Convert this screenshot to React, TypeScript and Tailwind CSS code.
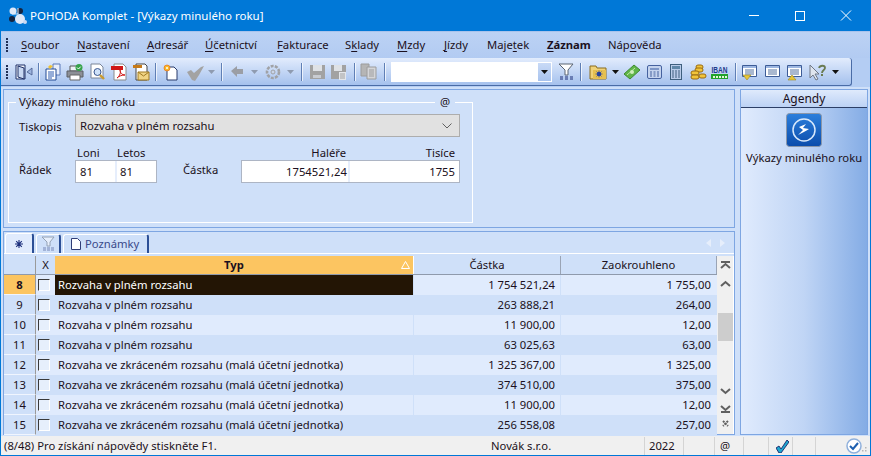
import React from "react";

const font = { fontFamily: '"Noto Sans", "DejaVu Sans", sans-serif' };

function U({ children }: { children: React.ReactNode }) {
  return <span className="underline underline-offset-2">{children}</span>;
}

function Grip() {
  return (
    <div className="flex flex-col gap-[1px] w-[3px] shrink-0">
      {[0, 1, 2, 3, 4].map((i) => (
        <div key={i} className="w-[2px] h-[2px] bg-[#1f2f55]" />
      ))}
    </div>
  );
}

function Sep({ className }: { className: string }) {
  return <div className={"w-[2px] h-[18px] shrink-0 border-l border-[#5f7fb5] bg-white/70 " + className} />;
}

function Drop({ className, grey }: { className: string; grey?: boolean }) {
  return (
    <svg width="7" height="4" viewBox="0 0 7 4" className={"shrink-0 " + className}>
      <path d="M0 0h7L3.500 4z" fill={grey ? "#8f9bb0" : "#111"} />
    </svg>
  );
}

function Ic({ w = 16, h = 16, className, children }: { w?: number; h?: number; className: string; children: React.ReactNode }) {
  return (
    <svg width={w} height={h} viewBox={`0 0 ${w} ${h}`} className={"shrink-0 overflow-visible " + className}>
      {children}
    </svg>
  );
}

const Door = (
  <>
    <path d="M1 1h9v14H1z" fill="#f2f5fb" stroke="#1f3068" />
    <path d="M3 2l6 2v11l-6-2z" fill="#c8d8f2" stroke="#1f3068" />
    <path d="M17 4l-5 4 5 3v-2h0V6z" fill="#9db4de" stroke="#44598a" strokeWidth=".8" />
  </>
);
const Docs = (
  <>
    <path d="M8 0h7v11H8z" fill="#e8eefb" stroke="#5a78b8" />
    <path d="M1 5h10v11H1z" fill="#fff" stroke="#234a94" />
    <path d="M3 8h6M3 10h6M3 12h6M3 14h4" stroke="#2c5bb0" />
    <path d="M5 1l3 1-3 3-2-2z" fill="#f2c231" />
  </>
);
const Printer = (
  <>
    <path d="M3 2h9v5H3z" fill="#eef1f6" stroke="#555" />
    <path d="M0 7h16v6H0z" fill="#8c8f96" stroke="#5b5e64" />
    <path d="M3 11h10v5H3z" fill="#fff" stroke="#666" />
    <circle cx="12" cy="3.500" r="3.500" fill="#35a24a" />
    <path d="M10 3.500l1.500 1.500 2.200-2.400" stroke="#fff" fill="none" />
  </>
);
const Preview = (
  <>
    <path d="M1 0h9l3 3v11H1z" fill="#fff" stroke="#7a8598" />
    <circle cx="7.500" cy="8" r="3.500" fill="#cfe2fa" stroke="#3a5790" />
    <path d="M10 11l4 4" stroke="#c99a2e" strokeWidth="2.400" />
  </>
);
const Pdf = (
  <>
    <path d="M3 0h9l3 3v13H3z" fill="#fff" stroke="#8a8a8a" />
    <path d="M0 2h12v4H0z" fill="#d01818" />
    <path d="M6 14c3-2 4-6 3-8 0 3 2 5 5 5-3 0-6 1-8 3z" fill="none" stroke="#d01818" />
  </>
);
const MailPdf = (
  <>
    <path d="M3 0h9l2 2v14H3z" fill="#fff" stroke="#444" />
    <path d="M0 1h9v3H0z" fill="#c77a18" />
    <path d="M5 8h11v8H5z" fill="#f0d484" stroke="#a07a22" />
    <path d="M5 8l5.500 4L16 8" fill="none" stroke="#a07a22" />
  </>
);
const NewDoc = (
  <>
    <path d="M4 3h7l3 3v10H4z" fill="#fff" stroke="#283a6b" />
    <circle cx="4" cy="4" r="3" fill="#f8b92a" stroke="#e8701a" strokeWidth=".7" />
    <circle cx="4" cy="4" r="1" fill="#fff" />
  </>
);
const CheckGrey = <path d="M0 8l4-2 3 3 7-6 3-1-5 9-4 6-3-1z" fill="#a3a3a3" />;
const Back = <path d="M0 6l6-5v3h6v5H6v3z" fill="#9b9ea5" />;
const Gear = (
  <>
    <circle cx="8" cy="8" r="6" fill="none" stroke="#a0a2a6" strokeWidth="2.600" strokeDasharray="3 1.200" />
    <circle cx="8" cy="8" r="2" fill="#c9d5e8" stroke="#a0a2a6" />
  </>
);
const Save = (
  <>
    <path d="M0 1h15v14H0z" fill="#a2a2a2" />
    <path d="M3 1h9v6H3z" fill="#dfe2e6" />
    <path d="M3 11h8v3H3z" fill="#c9ccd1" />
  </>
);
const Save2 = (
  <>
    <path d="M0 1h15v14H0z" fill="#a2a2a2" />
    <path d="M3 1h8v6H3z" fill="#dfe2e6" />
    <path d="M8 8h7v8H8z" fill="#e3e6ea" />
    <path d="M9 10h5M9 12h5M9 14h5" stroke="#a2a2a2" />
  </>
);
const Copy = (
  <>
    <path d="M0 0h8v12H0z" fill="#b5b5b5" stroke="#9c9c9c" />
    <path d="M6 3h9v12H6z" fill="#d4d5d8" stroke="#9c9c9c" />
    <path d="M8 6h5M8 8h5M8 10h5M8 12h5" stroke="#9c9c9c" />
  </>
);
const Filter = (
  <>
    <path d="M1 0h14l-5 6v5H7V6z" fill="#fff" stroke="#5a6472" />
    <path d="M2 13h3M7 13h3M12 13h3M2 15h3M7 15h3M12 15h3" stroke="#1e2f77" />
  </>
);
const Folder = (
  <>
    <path d="M0 2h6l1 2h9v11H0z" fill="#efd27a" stroke="#8b6d1f" />
    <path d="M3 6h13v9H3z" fill="#e6c050" />
    <circle cx="9" cy="10" r="2.200" fill="#2744a0" />
    <path d="M9 6.500v7M5.500 10h7M6.500 7.500l5 5M11.500 7.500l-5 5" stroke="#2744a0" strokeWidth=".7" />
  </>
);
const Money = (
  <>
    <path d="M0 10L10 1l6 5-10 9z" fill="#5fb548" stroke="#3f8a32" />
    <path d="M3 11l8-7" stroke="#bfe8a8" />
    <circle cx="8" cy="8" r="2" fill="#cfeeba" />
  </>
);
const CalcWide = (
  <>
    <rect x=".5" y="1.500" width="14" height="13" rx="1.500" fill="#c4d3ee" stroke="#46629f" />
    <path d="M3 4h9v2H3z" fill="#7d96c7" />
    <path d="M3 8h2M6.500 8h2M10 8h2M3 10h2M6.500 10h2M10 10h2M3 12h2M6.500 12h2M10 12h2" stroke="#46629f" />
  </>
);
const CalcTall = (
  <>
    <rect x=".5" y=".5" width="11" height="15" fill="#b9cbe9" stroke="#3e5f7e" />
    <path d="M2 2h8v3H2z" fill="#5f87a8" />
    <path d="M2 7h2M5 7h2M8 7h2M2 9h2M5 9h2M8 9h2M2 11h2M5 11h2M8 11h2M2 13h2M5 13h2M8 13h2" stroke="#3e5f7e" />
  </>
);
const Coins = (
  <>
    <rect x="6" y="1" width="7" height="4" rx="2" fill="#f1c43a" stroke="#9a6b10" />
    <rect x="5" y="4" width="8" height="4" rx="2" fill="#f1c43a" stroke="#9a6b10" />
    <rect x="1" y="7" width="8" height="4" rx="2" fill="#f1c43a" stroke="#9a6b10" />
    <rect x="1" y="11" width="8" height="4" rx="2" fill="#f1c43a" stroke="#9a6b10" />
    <rect x="9" y="10" width="7" height="4" rx="2" fill="#f1c43a" stroke="#9a6b10" />
  </>
);
const Iban = (
  <>
    <text x=".5" y="8.500" fontSize="9" fontWeight="700" fill="#223a8c" textLength="16" lengthAdjust="spacingAndGlyphs" fontFamily="Liberation Sans">
      IBAN
    </text>
    <path d="M0 10h17v5H0z" fill="#22a32b" />
    <path d="M2 12h2v2H2zM5 12h2v2H5zM8 12h2v2H8zM11 12h2v2h-2zM14 12h2v2h-2z" fill="#e6f7d8" />
  </>
);
function ListIc({ mark }: { mark: "down" | "none" | "up" }) {
  return (
    <>
      <path d="M.5 1.500h14v11h-14z" fill="#fff" stroke="#3d5c97" />
      <path d="M1 2h13v2H1z" fill="#9db7e2" />
      <path d="M3 6h9M3 8h9M3 10h9" stroke="#53709f" />
      {mark === "down" && <path d="M1 11h8l-4 5z" fill="#e8c63a" stroke="#a08a20" strokeWidth=".6" />}
      {mark === "up" && <path d="M1 16l4-5 4 5z" fill="#e8c63a" stroke="#a08a20" strokeWidth=".6" />}
    </>
  );
}
const CursorHelp = (
  <>
    <path d="M1 1v13l3-3 3 5 2-1-3-5h4z" fill="#dfe5ef" stroke="#707886" />
    <path d="M10 4c1-3 6-3 6 0 0 2-3 2-3 5" fill="none" stroke="#6a7b52" strokeWidth="1.800" />
    <path d="M12 10h2v2h-2z" fill="#6a7b52" />
  </>
);

const menus: [React.ReactNode, string][] = [
  [<><U>S</U>oubor</>, "w-[56px]"],
  [<><U>N</U>astavení</>, "w-[70px]"],
  [<><U>A</U>dresář</>, "w-[58px]"],
  [<><U>Ú</U>četnictví</>, "w-[72px]"],
  [<><U>F</U>akturace</>, "w-[68px]"],
  [<>S<U>k</U>lady</>, "w-[52px]"],
  [<><U>M</U>zdy</>, "w-[47px]"],
  [<><U>J</U>ízdy</>, "w-[43px]"],
  [<>Maje<U>t</U>ek</>, "w-[60px]"],
  [<span className="font-bold"><U>Z</U>áznam</span>, "w-[61px]"],
  [<>Náp<U>o</U>věda</>, "w-[60px]"],
];

const rows = [
  [8, "Rozvaha v plném rozsahu", "1 754 521,24", "1 755,00"],
  [9, "Rozvaha v plném rozsahu", "263 888,21", "264,00"],
  [10, "Rozvaha v plném rozsahu", "11 900,00", "12,00"],
  [11, "Rozvaha v plném rozsahu", "63 025,63", "63,00"],
  [12, "Rozvaha ve zkráceném rozsahu (malá účetní jednotka)", "1 325 367,00", "1 325,00"],
  [13, "Rozvaha ve zkráceném rozsahu (malá účetní jednotka)", "374 510,00", "375,00"],
  [14, "Rozvaha ve zkráceném rozsahu (malá účetní jednotka)", "11 900,00", "12,00"],
  [15, "Rozvaha ve zkráceném rozsahu (malá účetní jednotka)", "256 558,08", "257,00"],
] as const;

function ScrollBtn({ d, className }: { d: string; className: string }) {
  return (
    <svg width="11" height="9" viewBox="0 0 11 9" className={"shrink-0 " + className}>
      <path d={d} fill="none" stroke="#606060" strokeWidth="2" />
    </svg>
  );
}

export default function App() {
  return (
    <div style={font} className="w-[871px] h-[456px] flex flex-col overflow-hidden border border-[#0078d7] border-t-0 bg-[#cfe0f9] text-[11.25px] leading-none text-[#1b1020]">
      {/* title bar */}
      <div className="h-[31px] shrink-0 bg-[#0078d7] flex items-center text-white">
        <svg width="18" height="18" viewBox="0 0 18 18" className="ml-[8px] shrink-0">
          <circle cx="4" cy="4" r="3.500" fill="#dfe8f8" />
          <circle cx="11" cy="4" r="3" fill="#15233f" />
          <circle cx="3" cy="12" r="3" fill="#15233f" />
          <circle cx="11" cy="12" r="5" fill="#dfe8f8" />
          <circle cx="16" cy="15" r="2" fill="#c9d8f2" />
          <path d="M9 1v6M3 7h6" stroke="#dfe8f8" />
        </svg>
        <span className="ml-[3px] text-[11.5px]">POHODA Komplet - [Výkazy minulého roku]</span>
        <div className="ml-auto flex items-center">
          <div className="w-[46px] flex justify-center"><div className="w-[10px] h-px bg-white" /></div>
          <div className="w-[46px] flex justify-center"><div className="w-[10px] h-[10px] border border-white" /></div>
          <svg width="46" height="11" viewBox="0 0 46 11" className="mr-[1px]">
            <path d="M18 .5l10 10M28 .5l-10 10" stroke="#fff" />
          </svg>
        </div>
      </div>

      {/* menu */}
      <div className="h-[27px] shrink-0 border-t border-[#a9c3ec] bg-gradient-to-b from-[#bcd2f4] to-[#b2cbf2] flex items-center pl-[5px]">
        <Grip />
        <div className="ml-[12px] flex items-center">
          {menus.map(([label, w], i) => (
            <div key={i} className={w}>{label}</div>
          ))}
        </div>
      </div>

      {/* toolbar */}
      <div className="h-[29px] shrink-0 bg-[#b4cdf3] flex">
        <div className="w-[851px] h-[28px] rounded-r-[3px] border-b border-r border-[#4a6ca6] bg-gradient-to-b from-[#e2ecfd] to-[#a5c1ed] flex items-center pl-[5px]">
          <Grip />
          <Ic w={18} className="ml-[6px]">{Door}</Ic>
          <Sep className="ml-[5px]" />
          <Ic className="ml-[5px]">{Docs}</Ic>
          <Ic className="ml-[6px]">{Printer}</Ic>
          <Ic className="ml-[7px]">{Preview}</Ic>
          <Ic className="ml-[5px]">{Pdf}</Ic>
          <Ic className="ml-[6px]">{MailPdf}</Ic>
          <Sep className="ml-[6px]" />
          <Ic className="ml-[6px]">{NewDoc}</Ic>
          <Ic w={17} className="ml-[8px]">{CheckGrey}</Ic>
          <Drop grey className="ml-[4px]" />
          <Sep className="ml-[6px]" />
          <Ic w={13} h={13} className="ml-[8px]">{Back}</Ic>
          <Drop grey className="ml-[7px]" />
          <Ic className="ml-[7px]">{Gear}</Ic>
          <Drop grey className="ml-[6px]" />
          <Sep className="ml-[7px]" />
          <Ic className="ml-[7px]">{Save}</Ic>
          <Ic className="ml-[5px]">{Save2}</Ic>
          <Sep className="ml-[7px]" />
          <Ic className="ml-[5px]">{Copy}</Ic>
          <Sep className="ml-[7px]" />
          <div className="ml-[5px] w-[161px] h-[20px] bg-white flex justify-end shrink-0 border border-white">
            <div className="w-[13px] bg-gradient-to-b from-[#c9daf6] to-[#a8c3ee] flex items-center justify-center">
              <Drop className="" />
            </div>
          </div>
          <Ic className="ml-[6px]">{Filter}</Ic>
          <Sep className="ml-[6px]" />
          <Ic className="ml-[8px]">{Folder}</Ic>
          <Drop className="ml-[6px]" />
          <Ic className="ml-[5px]">{Money}</Ic>
          <Ic w={15} className="ml-[7px]">{CalcWide}</Ic>
          <Ic w={12} className="ml-[8px]">{CalcTall}</Ic>
          <Ic className="ml-[8px]">{Coins}</Ic>
          <Ic w={17} className="ml-[5px]">{Iban}</Ic>
          <Sep className="ml-[7px]" />
          <Ic w={15} className="ml-[5px]"><ListIc mark="down" /></Ic>
          <Ic w={15} className="ml-[8px]"><ListIc mark="none" /></Ic>
          <Ic w={15} className="ml-[7px]"><ListIc mark="up" /></Ic>
          <Ic className="ml-[7px]">{CursorHelp}</Ic>
          <Drop className="ml-[7px]" />
        </div>
      </div>

      {/* body */}
      <div className="flex-1 min-h-0 flex pl-[2px] pr-[2px] pt-[2px]">
        <div className="w-[732px] flex flex-col shrink-0">
          {/* form */}
          <div className="h-[139px] shrink-0 border border-[#7ea6e2] pl-[4px] pt-[12px]">
            <div className="relative w-[465px] h-[121px] border border-white flex flex-col">
              <span className="absolute left-[7px] -top-[7px] bg-[#cfe0f9] px-[3px]">Výkazy minulého roku</span>
              <span className="absolute left-[426px] -top-[7px] bg-[#cfe0f9] px-[5px]">@</span>
              <div className="flex items-center mt-[11px] pl-[10px]">
                <span className="w-[56px] mt-[3px]">Tiskopis</span>
                <div className="w-[385px] h-[23px] border border-[#adadad] bg-[#e1e1e1] flex items-center justify-between pl-[4px] pr-[7px]">
                  <span>Rozvaha v plném rozsahu</span>
                  <svg width="10" height="6" viewBox="0 0 10 6"><path d="M.5.500L5 5 9.500.500" fill="none" stroke="#606060" /></svg>
                </div>
              </div>
              <div className="flex mt-[8px] pl-[10px]">
                <div className="w-[56px] mt-[19px]">Řádek</div>
                <div className="w-[108px]">
                  <div className="flex h-[15px] items-center">
                    <span className="ml-[2px] w-[40px]">Loni</span>
                    <span>Letos</span>
                  </div>
                  <div className="w-[82px] h-[23px] border border-[#adb5c4] bg-white flex items-center">
                    <span className="pl-[4px] w-[41px] h-full flex items-center border-r-2 border-[#e6eefc]">81</span>
                    <span className="pl-[3px]">81</span>
                  </div>
                </div>
                <div className="w-[58px] mt-[19px]">Částka</div>
                <div className="w-[219px]">
                  <div className="flex h-[15px] items-center">
                    <span className="w-[105px] text-right">Haléře</span>
                    <span className="w-[109px] text-right">Tisíce</span>
                  </div>
                  <div className="w-[219px] h-[23px] border border-[#adb5c4] bg-white flex items-center">
                    <span className="w-[108px] h-full flex items-center justify-end pr-[1px] border-r-2 border-[#e6eefc]">1754521,24</span>
                    <span className="flex-1 text-right pr-[4px]">1755</span>
                  </div>
                </div>
              </div>
            </div>
          </div>

          {/* tabs + grid */}
          <div className="mt-[3px] flex-1 min-h-0 border border-[#7ea6e2] flex flex-col">
            <div className="h-[22px] shrink-0 flex items-end border-b border-white pl-[1px]">
              <div className="w-[29px] h-[20px] bg-[#e0ebfd] border-t border-l border-white border-r-2 border-r-[#2c4f96] rounded-t-[3px] flex items-center justify-center">
                <svg width="8" height="8" viewBox="0 0 8 8">
                  <path d="M4 0v8M0 4h8M1.200 1.200l5.600 5.600M6.800 1.200l-5.600 5.600" stroke="#1c2f7c" strokeWidth="1.100" />
                </svg>
              </div>
              <div className="ml-[2px] w-[25px] h-[19px] border-t border-l border-white border-r-2 border-r-[#2c4f96] rounded-t-[3px] flex items-center justify-center">
                <Ic w={14} h={14} className="opacity-50">
                  <path d="M1 0h12l-4 5v4H6V5z" fill="#fff" stroke="#5a6472" />
                  <path d="M2 11h3M6 11h3M10 11h3M2 13h3M6 13h3M10 13h3" stroke="#1e2f77" />
                </Ic>
              </div>
              <div className="ml-[2px] w-[86px] h-[19px] border-t border-l border-white border-r-2 border-r-[#2c4f96] rounded-t-[3px] flex items-center pl-[7px] text-[#3a4a8a]">
                <svg width="10" height="12" viewBox="0 0 10 12" className="shrink-0">
                  <path d="M.5.500h6l3 3v8h-9z" fill="#fff" stroke="#2f3d76" />
                </svg>
                <span className="ml-[4px]">Poznámky</span>
              </div>
              <div className="ml-auto mr-[9px] mb-[6px] flex gap-[9px]">
                <svg width="5" height="8" viewBox="0 0 5 8"><path d="M5 0v8L0 4z" fill="#e6eefb" /></svg>
                <svg width="5" height="8" viewBox="0 0 5 8"><path d="M0 0v8l5-4z" fill="#e6eefb" /></svg>
              </div>
            </div>
            <div className="flex-1 min-h-0 flex mt-[2px]">
              <div className="flex-1 min-w-0 flex flex-col">
                <div className="h-[19px] shrink-0 flex border-b border-[#8f9aac]">
                  <div className="w-[32px] shrink-0 border-r border-[#9a9a9a]" />
                  <div className="w-[19px] shrink-0 flex items-center justify-center">X</div>
                  <div className="w-[358px] shrink-0 bg-[#fcc561] flex items-center justify-center font-bold relative">
                    Typ
                    <svg width="9" height="8" viewBox="0 0 9 8" className="absolute right-[3px] top-[5px]"><path d="M.5 7.500L4.500.500l4 7z" fill="none" stroke="#fff" /></svg>
                  </div>
                  <div className="w-[147px] shrink-0 border-l border-white flex items-center justify-center">Částka</div>
                  <div className="flex-1 border-l border-[#9aa4b5] flex items-center justify-center border-r">Zaokrouhleno</div>
                </div>
                {rows.map((r, i) => {
                  const sel = i === 0;
                  const light = i % 2 === 0;
                  const bg = light ? "bg-[#e0ebfd]" : "bg-[#cfe0f9]";
                  return (
                    <div key={r[0]} className="h-[20px] shrink-0 flex">
                      <div className={"w-[32px] shrink-0 border-r border-b border-r-[#9a9a9a] border-b-[#f0f5fe] flex items-center justify-center " + (sel ? "bg-[#fcc561] font-bold" : "")}>
                        {r[0]}
                      </div>
                      <div className={"w-[19px] shrink-0 flex items-center pl-[2px] " + bg}>
                        <div className="w-[12px] h-[12px] border border-t-[#3a3a3a] border-l-[#3a3a3a] border-r-white border-b-white bg-[#e6effc]" />
                      </div>
                      <div className={"w-[358px] shrink-0 flex items-center pl-[3px] " + (sel ? "bg-[#231505] text-white" : bg)}>
                        {r[1]}
                      </div>
                      <div className={"w-[147px] shrink-0 flex items-center justify-end pr-[5px] border-l border-[#cfe0f9] " + bg}>{r[2]}</div>
                      <div className={"flex-1 flex items-center justify-end pr-[6px] border-l border-[#cfe0f9] " + bg}>{r[3]}</div>
                    </div>
                  );
                })}
              </div>
              <div className="w-[17px] shrink-0 bg-[#f0f0f0] flex flex-col items-center pt-[5px] border-r border-white">
                <ScrollBtn d="M1 1h9M1 7l4.500-4 4.500 4" className="" />
                <ScrollBtn d="M1 7l4.500-4 4.500 4" className="mt-[9px]" />
                <div className="w-[15px] h-[28px] mt-[25px] bg-[#cdcdcd]" />
                <ScrollBtn d="M1 2l4.500 4 4.500-4" className="mt-[46px]" />
                <ScrollBtn d="M1 2l4.500 4 4.500-4M1 8h9" className="mt-[8px]" />
                <svg width="7" height="7" viewBox="0 0 7 7" className="mt-[7px]"><path d="M1 1l5 5M6 1L1 6" stroke="#606060" strokeWidth="2" strokeDasharray="2 1" /></svg>
              </div>
            </div>
          </div>
        </div>

        {/* agendy */}
        <div className="ml-[5px] flex-1 min-w-0 flex flex-col border border-[#7ea6e2]">
          <div className="h-[18px] shrink-0 bg-gradient-to-b from-[#dfeafc] to-[#bcd2f4] border-b border-[#2c3f66] flex items-center justify-center text-[12px]">Agendy</div>
          <div className="flex-1 bg-gradient-to-r from-[#e0ebfd] via-[#c0d5f5] to-[#84ace5] flex flex-col items-center pt-[5px]">
            <svg width="36" height="34" viewBox="0 0 36 34" className="shrink-0">
              <defs>
                <linearGradient id="agBlue" x1="0" y1="0" x2="0" y2="1">
                  <stop offset="0" stopColor="#2c7fdc" />
                  <stop offset="1" stopColor="#0b4cab" />
                </linearGradient>
              </defs>
              <rect x=".5" y=".5" width="35" height="33" rx="3" fill="url(#agBlue)" stroke="#8a96a8" />
              <circle cx="18" cy="17" r="11" fill="none" stroke="#d8e8fb" strokeWidth="1.500" />
              <path d="M13 14l7-3-3 4 6 1c-3 2-7 4-11 6l5-5z" fill="#fff" />
            </svg>
            <span className="mt-[5px] whitespace-nowrap">Výkazy minulého roku</span>
          </div>
        </div>
      </div>

      {/* status */}
      <div className="h-[19px] shrink-0 mt-[1px] bg-[#f0f0f0] flex items-center pt-[1px]">
        <span className="w-[489px] shrink-0 pl-[3px]">(8/48) Pro získání nápovědy stiskněte F1.</span>
        <span className="w-[154px] shrink-0 pl-[1px]">Novák s.r.o.</span>
        <span className="w-[39px] h-full shrink-0 border-l border-[#d4d4d4] flex items-center pl-[4px]">2022</span>
        <span className="w-[31px] h-full shrink-0 border-l border-[#d4d4d4]" />
        <span className="w-[29px] h-full shrink-0 border-l border-[#d4d4d4] flex items-center pl-[5px]">@</span>
        <span className="w-[25px] h-full shrink-0 border-l border-[#d4d4d4]" />
        <span className="w-[24px] h-full shrink-0 border-l border-[#d4d4d4] flex items-center pl-[7px]">
          <svg width="13" height="13" viewBox="0 0 13 13"><path d="M0 8l3-2 2 3 6-9 2 2-8 11H3z" fill="#1fa8cf" stroke="#10105c" strokeWidth=".8" /></svg>
        </span>
        <span className="w-[23px] h-full shrink-0 border-l border-[#d4d4d4]" />
        <span className="flex-1 h-full border-l border-[#d4d4d4] flex items-center justify-end pr-[2px]">
          <svg width="22" height="16" viewBox="0 0 22 16">
            <circle cx="8" cy="8" r="7" fill="#fff" stroke="#8fb0dc" strokeWidth="1.500" />
            <path d="M4 8l3 3 5-6" fill="none" stroke="#1d5fb0" strokeWidth="2" />
            <path d="M19 9h1.500v1.500H19zM16 12h1.500v1.500H16zM19 12h1.500v1.500H19z" fill="#b5b5b5" />
          </svg>
        </span>
      </div>
    </div>
  );
}
